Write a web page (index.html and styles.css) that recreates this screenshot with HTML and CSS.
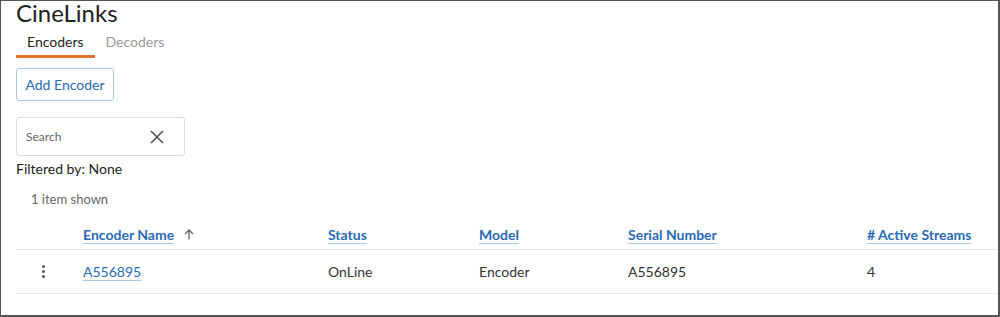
FILE: index.html
```html
<!DOCTYPE html>
<html lang="en">
<head>
    <meta charset="UTF-8">
    <title>CineLinks</title>
    <link rel="stylesheet" href="styles.css">
</head>
<body>
    <div class="frame">
        <h1 class="title">CineLinks</h1>

        <!-- Tabs -->
        <div class="tabs">
            <div class="tab active">Encoders</div>
            <div class="tab">Decoders</div>
        </div>

        <button class="btn-outline">Add Encoder</button>

        <!-- Search -->
        <div class="search">
            <span class="search-text">Search</span>
            <svg class="search-clear" width="14" height="14" viewBox="0 0 14 14">
                <path d="M1 1 L13 13 M13 1 L1 13" stroke="#555" stroke-width="1.6" fill="none"/>
            </svg>
        </div>
        <div class="filtered">Filtered by: None</div>
        <div class="count">1 item shown</div>

        <!-- Grid -->
        <div class="grid">
            <div class="grid-row head">
                <div class="cell"></div>
                <div class="cell"><a href="#">Encoder Name</a>
                    <svg class="sort" width="10" height="11" viewBox="0 0 10 11">
                        <path d="M5 10.5 V1 M1 5 L5 1 L9 5" stroke="#666" stroke-width="1.3" fill="none"/>
                    </svg>
                </div>
                <div class="cell"><a href="#">Status</a></div>
                <div class="cell"><a href="#">Model</a></div>
                <div class="cell"><a href="#">Serial Number</a></div>
                <div class="cell"><a href="#"># Active Streams</a></div>
            </div>
            <div class="grid-row">
                <div class="cell kebab"><span></span><span></span><span></span></div>
                <div class="cell"><a href="#" class="plain">A556895</a></div>
                <div class="cell">OnLine</div>
                <div class="cell">Encoder</div>
                <div class="cell">A556895</div>
                <div class="cell">4</div>
            </div>
        </div>
    </div>
</body>
</html>
```

FILE: styles.css
```css
body {
    margin: 0;
    font-family: Lato, "Open Sans", sans-serif;
    color: #333;
    background: white;
}

.frame {
    box-sizing: border-box;
    width: 1000px;
    height: 317px;
    border-style: solid;
    border-color: #555;
    border-width: 1px 2px 2px 1px;
    padding-left: 15px;
}

.title {
    margin: 0;
    font-size: 24px;
    font-weight: 400;
    line-height: 24px;
    color: #222;
}

.tabs {
    display: flex;
    margin-top: 4px;
}

.tab {
    padding: 0 11px;
    height: 26px;
    line-height: 26px;
    font-size: 14px;
    color: #999;
    border-bottom: 3px solid transparent;
}

.tab.active {
    color: #222;
    border-bottom-color: #e8702a;
}

.btn-outline {
    display: block;
    margin-top: 10px;
    width: 98px;
    height: 33px;
    background: white;
    border: 1px solid #a8c8e6;
    border-radius: 3px;
    color: #2a6bb5;
    font-family: inherit;
    font-size: 14px;
    padding: 0;
}

.search {
    box-sizing: border-box;
    margin-top: 16px;
    width: 169px;
    height: 39px;
    border: 1px solid #ddd;
    border-radius: 3px;
    display: flex;
    align-items: center;
    justify-content: space-between;
    padding: 0 20px 0 9px;
}

.search-text {
    font-size: 12px;
    color: #666;
}

.filtered {
    margin-top: 5px;
    font-size: 14px;
    line-height: 16px;
    color: #222;
}

.count {
    margin-top: 14px;
    padding-left: 15px;
    font-size: 13px;
    color: #666;
}

.grid {
    margin-top: 14px;
}

.grid-row {
    display: grid;
    grid-template-columns: 67px 245px 151px 149px 239px 1fr;
    height: 43px;
    border-bottom: 1px solid #e8e8e8;
    align-items: center;
    font-size: 14px;
    color: #333;
}

.grid-row.head {
    box-sizing: border-box;
    height: 29px;
    padding-top: 5px;
    align-items: start;
}

.head a {
    font-weight: 700;
}

.cell a {
    color: #2a6bb5;
    text-decoration: underline;
    text-decoration-color: #a8c8e6;
    text-underline-offset: 3px;
}

.sort {
    margin-left: 6px;
}

.kebab {
    display: flex;
    flex-direction: column;
    align-items: center;
    gap: 2px;
    padding-right: 12px;
    padding-left: 0;
}

.kebab span {
    width: 3px;
    height: 3px;
    background: #555;
    border-radius: 50%;
}
```
